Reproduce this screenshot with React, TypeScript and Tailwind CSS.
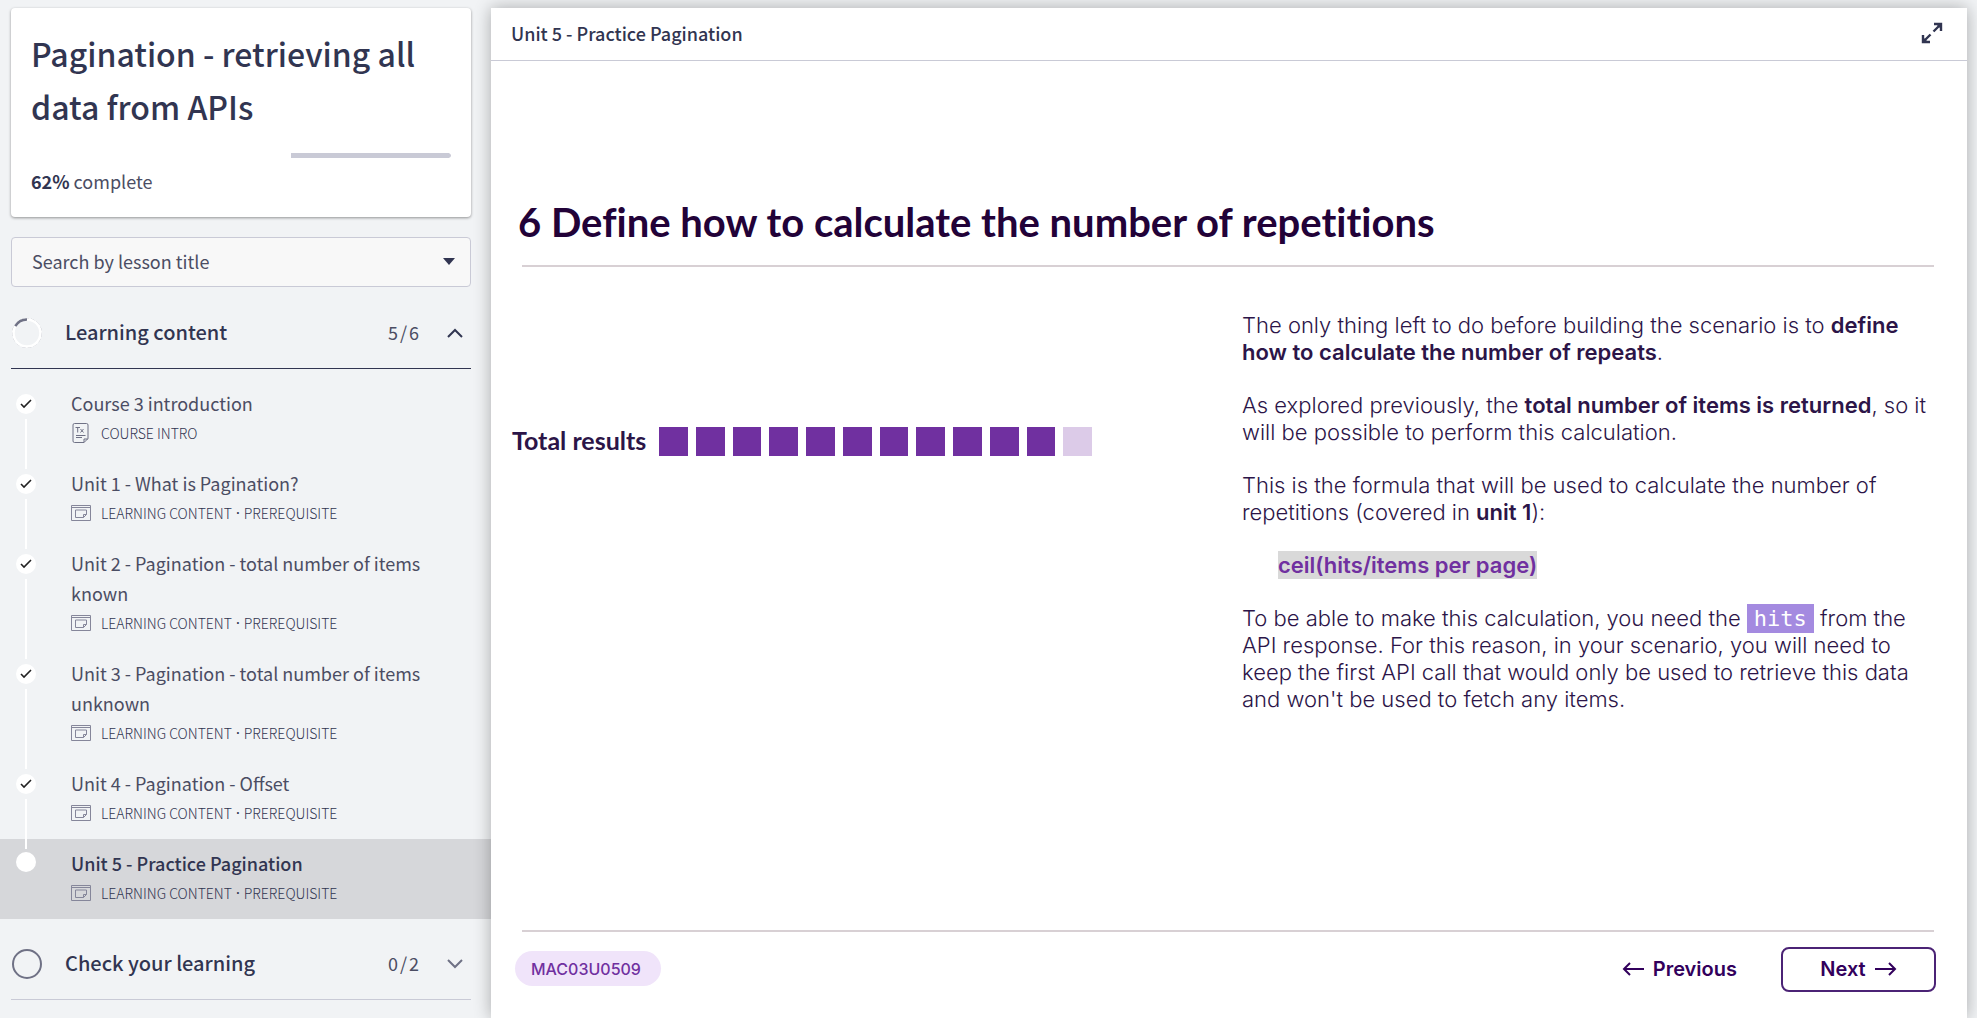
import { ReactNode } from "react";

type Lesson = { title: string; kind: string[]; icon: "text" | "media"; done: boolean };

const required = ["LEARNING CONTENT", "PREREQUISITE"];

const lessons: Lesson[] = [
  { title: "Course 3 introduction", kind: ["COURSE INTRO"], icon: "text", done: true },
  { title: "Unit 1 - What is Pagination?", kind: required, icon: "media", done: true },
  { title: "Unit 2 - Pagination - total number of items known", kind: required, icon: "media", done: true },
  { title: "Unit 3 - Pagination - total number of items unknown", kind: required, icon: "media", done: true },
  { title: "Unit 4 - Pagination - Offset", kind: required, icon: "media", done: true },
  { title: "Unit 5 - Practice Pagination", kind: required, icon: "media", done: false },
];

const squares = Array.from({ length: 12 }, (_, i) => i < 11);

function TextIcon() {
  return (
    <svg width="20" height="20" viewBox="0 0 20 20" fill="none" stroke="#6f7185" strokeWidth="1">
      <path d="M3.5 .5h12a1.500 1.500 0 0 1 1.500 1.500v13.500l-4 4H3.500A1.500 1.500 0 0 1 2 18V2A1.500 1.500 0 0 1 3.500.5z" />
      <path d="M13 19.500v-3.500h4" />
      <path d="M4.500 4.500h4.500M6.700 4.500v5M9.500 6l3 3.500M12.500 6l-3 3.500M5 12.500h9.500M5 14.500h6" />
    </svg>
  );
}

function MediaIcon() {
  return (
    <svg width="20" height="16" viewBox="0 0 20 16" fill="none" stroke="#85869a" strokeWidth="1">
      <path d="M.5.5h19v15H.500zM.500 2.500h19" />
      <path d="M4.500 5h11v4.500l-3 3h-8z" />
      <path d="M12.500 12.500v-3h3" />
    </svg>
  );
}

function Chevron({ up }: { up?: boolean }) {
  return (
    <svg width="16" height="10" viewBox="0 0 16 10" fill="none" stroke={up ? "#313551" : "#6f7185"} strokeWidth="2">
      <path d={up ? "M1 9l7-7 7 7" : "M1 1l7 7 7-7"} />
    </svg>
  );
}

function Arrow({ left }: { left?: boolean }) {
  return (
    <svg width="23" height="14" viewBox="0 0 23 14" fill="none" stroke="#32005c" strokeWidth="2">
      <path d={left ? "M22 7H2M8 1L2 7l6 6" : "M1 7h20M15 1l6 6-6 6"} />
    </svg>
  );
}

type SectionProps = { title: string; done: number; total: number; open?: boolean; ring: ReactNode };

function SectionHeader({ title, done, total, open, ring }: SectionProps) {
  return (
    <button
      type="button"
      aria-expanded={!!open}
      className={
        "mr-5 ml-[11px] flex h-[71px] items-center border-b pr-2 pl-px text-left " +
        (open ? "border-[#313551]" : "border-[#c9cad6]")
      }
    >
      {ring}
      <span className="ml-[23px] flex-1 pb-[2px] text-xl font-medium">{title}</span>
      <span className="pb-[2px] text-lg text-[#4b4d63]">
        {done}
        <span className="mx-[2px]">/</span>
        {total}
      </span>
      <span className="ml-7">
        <Chevron up={open} />
      </span>
    </button>
  );
}

function LessonRow({ lesson, last }: { lesson: Lesson; last: boolean }) {
  return (
    <li className={last ? "relative bg-[#d6d7da]" : "relative"}>
      <a href="#" aria-current={last ? "page" : undefined} className="flex px-4 pt-[9px] pb-[11px]">
        <span
          className={
            "flex h-5 w-5 shrink-0 items-center justify-center rounded-full bg-white " + (last ? "mt-1" : "mt-[6px]")
          }
        >
          {lesson.done && (
            <svg width="12" height="10" viewBox="0 0 12 10" fill="none" stroke="#222" strokeWidth="1.6">
              <path d="M1 5l3 3 7-7" />
            </svg>
          )}
        </span>
        <span className="ml-[35px] block w-[380px]">
          <span className={"block text-lg leading-[30px] " + (last ? "font-medium text-[#313551]" : "text-[#4b4d63]")}>
            {lesson.title}
          </span>
          <span className="flex h-[30px] items-center text-sm font-light">
            <span className="mr-[10px] flex w-5 justify-center">{lesson.icon === "text" ? <TextIcon /> : <MediaIcon />}</span>
            <span>{lesson.kind[0]}</span>
            {lesson.kind[1] && (
              <>
                <span className="mx-1 font-['Noto_Sans',sans-serif] font-medium">·</span>
                <span>{lesson.kind[1]}</span>
              </>
            )}
          </span>
        </span>
      </a>
      {!last && <span className="absolute top-10 -bottom-[10px] left-[25px] z-10 w-[2px] bg-white" />}
    </li>
  );
}

function Sidebar() {
  return (
    <aside className="flex w-[491px] shrink-0 flex-col pt-2 font-['Noto_Sans_CJK_SC',sans-serif] text-[#313551]">
      <section className="mr-5 ml-[11px] h-[209px] rounded-sm bg-white px-5 pt-[19px] shadow-[0_1px_3px_rgba(0,0,0,0.4)]">
        <h1 className="text-[32px] leading-[53px] font-medium text-[#313551]">Pagination - retrieving all data from APIs</h1>
        <div
          role="progressbar"
          aria-label="Course progress"
          aria-valuenow={62}
          aria-valuemin={0}
          aria-valuemax={100}
          className="mt-5 flex justify-end overflow-hidden rounded-full"
        >
          <div className="h-[5px] w-[38%] rounded-r-full bg-[#c9cad6]" />
        </div>
        <p className="mt-[7px] text-lg leading-[32px] text-[#4b4d63]">
          <span className="font-bold text-[#313551]">62%</span> complete
        </p>
      </section>
      <div className="relative mr-5 ml-[11px] mt-5">
        <select
          aria-label="Search by lesson title"
          className="h-[50px] w-full appearance-none rounded border border-[#c9cad6] bg-[#f8f8f8] px-5 pb-[3px] text-lg text-[#4b4d63]"
        >
          <option>Search by lesson title</option>
        </select>
        <svg className="pointer-events-none absolute top-[21px] right-4" width="12" height="7" viewBox="0 0 12 7" fill="#313551">
          <path d="M0 0h12L6 7z" />
        </svg>
      </div>
      <div className="mt-[11px] flex flex-col">
        <SectionHeader
          title="Learning content"
          done={5}
          total={6}
          open
          ring={
            <svg width="30" height="30" viewBox="0 0 30 30" fill="none">
              <circle cx="15" cy="15" r="14.500" stroke="#b9bac4" strokeWidth="1" strokeDasharray="4 2" />
              <circle cx="15" cy="15" r="13.500" stroke="#fff" strokeWidth="2.500" />
              <path d="M3.300 8.200A13.500 13.500 0 0 1 15 1.500" stroke="#6f7185" strokeWidth="2.500" />
            </svg>
          }
        />
      </div>
      <ol className="mt-[10px]">
        {lessons.map((lesson, i) => (
          <LessonRow key={lesson.title} lesson={lesson} last={i === lessons.length - 1} />
        ))}
      </ol>
      <div className="mt-[10px] flex flex-col">
        <SectionHeader
          title="Check your learning"
          done={0}
          total={2}
          ring={<span className="h-[30px] w-[30px] rounded-full border-2 border-[#6f7185]" />}
        />
      </div>
    </aside>
  );
}

function Slide() {
  return (
    <div className="flex flex-1 flex-col pr-[31px] pl-[21px] font-['Inter',sans-serif] text-[#2c1548]">
      <h2 className="mt-[135px] ml-[6px] font-['Lato',sans-serif] text-[40px] leading-[52px] font-bold text-[#220238] [font-variant-ligatures:none]">
        6 Define how to calculate the number of repetitions
      </h2>
      <hr className="mt-[17px] mr-[2px] ml-[10px] border-t-2 border-[#d8d0d4]" />
      <div className="flex flex-1 justify-between">
        <div className="mt-[159px] flex h-[30px] items-center gap-[13px]">
          <span className="w-[134px] pb-[2px] font-['Lato',sans-serif] text-[25px] leading-[28px] font-bold whitespace-nowrap">
            Total results
          </span>
          <div className="grid w-[433px] grid-cols-12 gap-2">
            {squares.map((filled, i) => (
              <span key={i} className={"h-[29px] " + (filled ? "bg-[#7030a0]" : "bg-[#dccbe8]")} />
            ))}
          </div>
        </div>
        <div className="mt-[45px] flex w-[694px] flex-col gap-[26px] text-[22px] leading-[27px] font-light">
          <p>
            The only thing left to do before building the scenario is to <strong className="font-semibold">define how to calculate the number of repeats</strong>.
          </p>
          <p>
            As explored previously, the <strong className="font-semibold">total number of items is returned</strong>, so it will be possible to perform this calculation.
          </p>
          <p>
            This is the formula that will be used to calculate the number of repetitions (covered in <strong className="font-semibold">unit 1</strong>):
          </p>
          <p className="pl-9">
            <strong className="bg-[#d9d9d9] py-px font-semibold text-[#7030a0]">ceil(hits/items per page)</strong>
          </p>
          <p>
            To be able to make this calculation, you need the{" "}
            <code className="bg-[#a48ae0] px-[7px] py-[2px] font-['DejaVu_Sans_Mono',monospace] text-white">hits</code> from the API response. For this reason, in your scenario, you will need to keep the first API call that would only be used to retrieve this data and won't be used to fetch any items.
          </p>
        </div>
      </div>
      <hr className="mr-[2px] ml-[10px] border-t-2 border-[#d8d0d4]" />
      <footer className="flex h-[86px] items-start pt-[15px] text-[#32005c]">
        <span className="mt-1 ml-[3px] flex h-[35px] items-center rounded-full bg-[#f0e4fa] pr-5 pl-4 text-base font-medium text-[#7030a0]">
          MAC03U0509
        </span>
        <button type="button" className="ml-auto flex h-[45px] items-center gap-2 pb-px text-xl font-semibold">
          <Arrow left />
          Previous
        </button>
        <button
          type="button"
          className="ml-11 flex h-[45px] w-[155px] items-center justify-center gap-2 rounded-lg border-2 border-[#4b2375] pb-px text-xl font-semibold"
        >
          Next
          <Arrow />
        </button>
      </footer>
    </div>
  );
}

export default function App() {
  return (
    <div className="flex min-h-screen bg-[#f1f3f5] pr-[10px]">
      <Sidebar />
      <main className="relative z-20 mt-2 flex flex-1 flex-col bg-white shadow-[0_0_16px_rgba(0,0,0,0.3)]">
        <header className="flex h-[53px] items-center justify-between border-b border-[#c9cad6] px-5 pb-[3px] font-['Noto_Sans_CJK_SC',sans-serif] text-[#313551]">
          <span className="text-lg font-medium">Unit 5 - Practice Pagination</span>
          <button type="button" aria-label="Toggle full screen" className="mr-1">
            <svg width="22" height="22" viewBox="0 0 22 22" fill="none" stroke="#313551" strokeWidth="2.4">
              <path d="M13 2h7v7M20 2l-7.500 7.500M9 20H2v-7M2 20l7.500-7.500" />
              <path d="M15 2h5v5zM2 15v5h5z" fill="#313551" stroke="none" />
            </svg>
          </button>
        </header>
        <Slide />
      </main>
    </div>
  );
}
